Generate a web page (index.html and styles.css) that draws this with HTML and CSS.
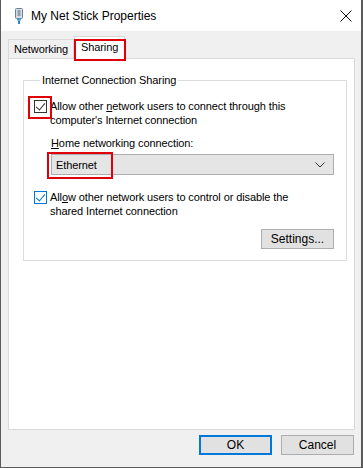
FILE: index.html
```html
<!DOCTYPE html>
<html>
    <head>
        <title>My Net Stick Properties</title>
        <link rel="stylesheet" href="styles.css">
    </head>
    <body>
        <div class="window">
            <div class="titleBar">
                <svg class="appIcon" width="10" height="16" viewBox="0 0 10 16">
                    <rect x="1.5" y="0.5" width="7" height="10" rx="1" fill="#d8dde3" stroke="#6f7d8c"/>
                    <rect x="3.5" y="2" width="3" height="6" fill="#8fa2b5"/>
                    <rect x="3" y="10.5" width="4" height="2" fill="#4aa3df"/>
                    <rect x="4" y="12.5" width="2" height="3.5" fill="#2b86c9"/>
                </svg>
                <div class="titleText">My Net Stick Properties</div>
                <svg class="closeIcon" width="12" height="12" viewBox="0 0 12 12">
                    <path d="M0.5 0.5 L11.5 11.5 M11.5 0.5 L0.5 11.5" stroke="#111" stroke-width="1"/>
                </svg>
            </div>
            <div class="content">
                <div class="tabs">
                    <div class="tab">Networking</div>
                    <div class="tab active"><span class="mark tabMark"></span>Sharing</div>
                </div>
                <div class="panel">
                    <fieldset class="group">
                        <legend>Internet Connection Sharing</legend>
                        <div class="checkRow">
                            <span class="check grey"><span class="mark checkMark"></span></span>
                            <div class="checkLabel">Allow other <u>n</u>etwork users to connect through this computer's Internet connection</div>
                        </div>
                        <div class="homeLabel"><u>H</u>ome networking connection:</div>
                        <div class="select">
                            <span class="mark selectMark"></span>
                            <span>Ethernet</span>
                            <svg width="10" height="6" viewBox="0 0 10 6">
                                <path d="M0.5 0.5 L5 5 L9.5 0.5" fill="none" stroke="#333" stroke-width="1"/>
                            </svg>
                        </div>
                        <div class="checkRow second">
                            <span class="check blue"></span>
                            <div class="checkLabel">All<u>o</u>w other network users to control or disable the shared Internet connection</div>
                        </div>
                        <div class="settingsRow">
                            <button class="btn">Settings...</button>
                        </div>
                    </fieldset>
                </div>
                <div class="footer">
                    <button class="btn default">OK</button>
                    <button class="btn">Cancel</button>
                </div>
            </div>
        </div>
    </body>
</html>
```

FILE: styles.css
```css
*{
    margin: 0;
    padding: 0;
    box-sizing: border-box;
}
body{
    font-family: "Liberation Sans", Arial, sans-serif;
    font-size: 11px;
    letter-spacing: -0.1px;
    color: #000;
    background: #fff;
}
.window{
    width: 363px;
    height: 468px;
    border: 1px solid #5a5a5a;
    border-top: none;
    border-right-width: 2px;
    display: flex;
    flex-direction: column;
}
.titleBar{
    height: 31px;
    background: #fff;
    display: flex;
    align-items: center;
    padding-left: 13px;
    padding-right: 5px;
}
.appIcon{
    margin-right: 7px;
}
.titleText{
    flex: 1;
    font-size: 12px;
    letter-spacing: 0;
}
.closeIcon{
    margin-right: 4px;
}
.content{
    flex: 1;
    background: #f0f0f0;
    padding: 5px 6px 0 7px;
    display: flex;
    flex-direction: column;
}
.tabs{
    display: flex;
    align-items: flex-end;
    height: 22px;
    position: relative;
    z-index: 1;
}
.tab{
    height: 19px;
    padding: 0 5px;
    border: 1px solid #d9d9d9;
    border-bottom: none;
    background: #f0f0f0;
    line-height: 19px;
}
.tab.active{
    height: 23px;
    margin-bottom: -1px;
    background: #fff;
    padding: 0 6px;
    line-height: 20px;
    position: relative;
}
.panel{
    height: 372px;
    background: #fff;
    border: 1px solid #d9d9d9;
    padding: 15px 12px 0 14px;
}
.group{
    height: 187px;
    border: 1px solid #dcdcdc;
    padding: 0 12px 0 10px;
}
.group legend{
    padding: 0 2px;
    margin-left: 6px;
}
.checkRow{
    display: flex;
    align-items: flex-start;
    margin-top: 13px;
}
.check{
    width: 13px;
    height: 13px;
    flex-shrink: 0;
    margin-top: 1px;
    margin-right: 3px;
    border: 1px solid #333;
    background: #fff;
    position: relative;
}
.check::after{
    content: "";
    position: absolute;
    left: 3px;
    top: 0px;
    width: 4px;
    height: 8px;
    border-right: 1px solid #333;
    border-bottom: 1px solid #333;
    transform: rotate(40deg);
}
.check.blue{
    border-color: #0078d7;
}
.check.blue::after{
    border-color: #0078d7;
}
.checkLabel{
    width: 250px;
    line-height: 14px;
}
.homeLabel{
    margin-top: 10px;
    margin-left: 17px;
}
.select{
    margin-top: 5px;
    margin-left: 17px;
    height: 21px;
    width: 283px;
    background: #e5e5e5;
    border: 1px solid #adadad;
    display: flex;
    align-items: center;
    justify-content: space-between;
    padding: 0 8px 0 4px;
    position: relative;
}
.checkRow.second{
    margin-top: 15px;
}
.settingsRow{
    display: flex;
    justify-content: flex-end;
    margin-top: 11px;
    padding-right: 0;
}
.btn{
    font-family: "Liberation Sans", Arial, sans-serif;
    font-size: 12px;
    width: 73px;
    height: 20px;
    background: #e1e1e1;
    border: 1px solid #adadad;
    color: #000;
}
.default{
    border: 2px solid #0078d7;
}
.footer{
    display: flex;
    justify-content: flex-end;
    gap: 9px;
    padding-top: 5px;
    padding-right: 1px;
}
.mark{
    position: absolute;
    border: 2px solid #e0000a;
}
.tabMark{
    left: -1px;
    top: 2px;
    right: -2px;
    bottom: -2px;
}
.checkMark{
    left: -7px;
    top: -5px;
    width: 24px;
    height: 23px;
    z-index: 2;
}
.selectMark{
    left: -5px;
    top: -3px;
    width: 66px;
    height: 27px;
}
```
